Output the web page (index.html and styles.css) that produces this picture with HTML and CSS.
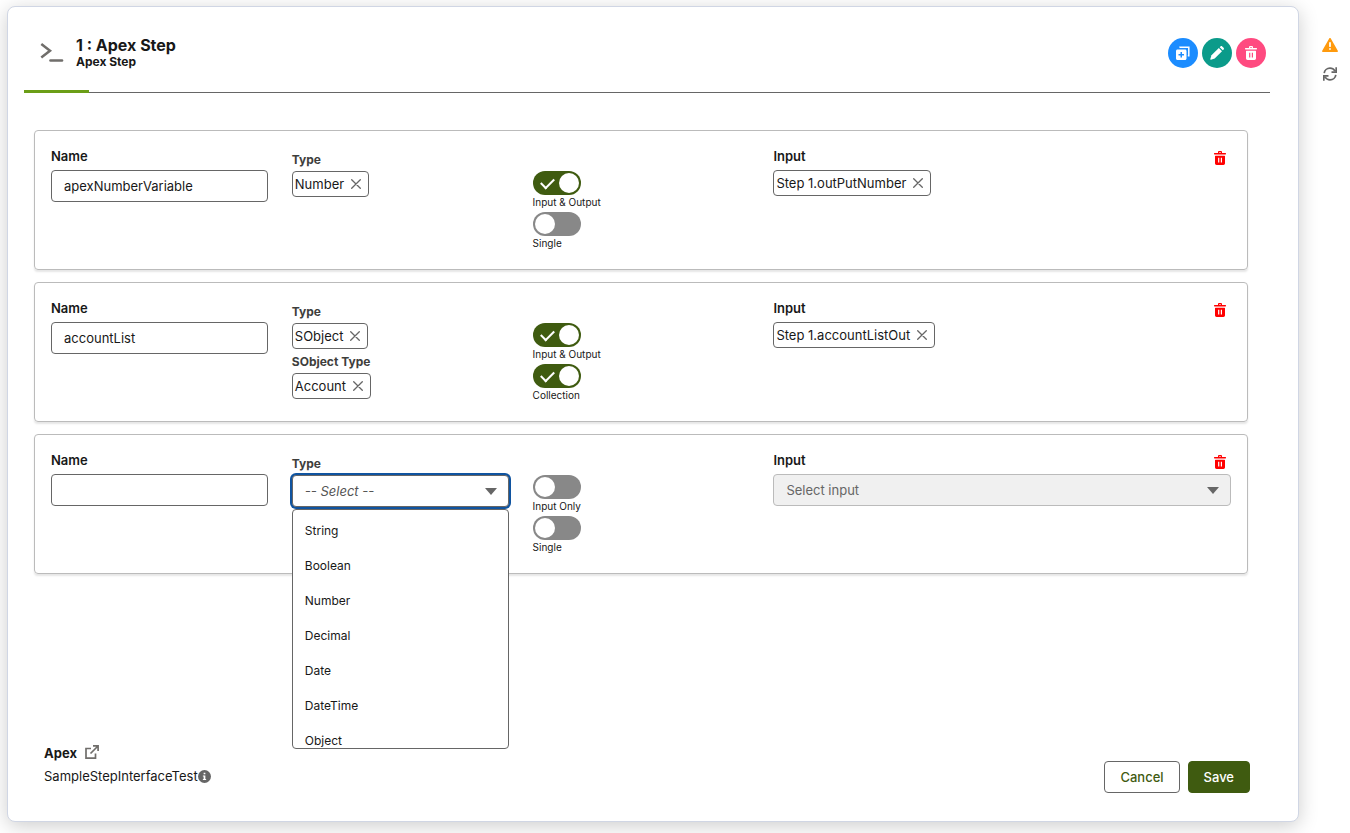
FILE: index.html
```html
<!DOCTYPE html>
<html lang="en">
<head>
    <meta charset="UTF-8">
    <meta name="viewport" content="width=device-width, initial-scale=1.0">
    <title>Apex Step</title>
    <link rel="stylesheet" href="styles.css">
</head>
<body>
    <!-- shared icons -->
    <svg class="sprite" aria-hidden="true">
        <symbol id="trash" viewBox="0 0 12 14">
            <path fill="currentColor" fill-rule="evenodd" d="M4 2V1.200C4 .5 4.500 0 5.200 0h1.600C7.500 0 8 .5 8 1.200V2h3.500c.3 0 .5.2.5.5v.6c0 .3-.2.500-.5.500H.5c-.3 0-.5-.2-.5-.5v-.6C0 2.200.2 2 .5 2zM5.200 2h1.600v-.8H5.200zM1.500 4.800h9c.3 0 .5.2.5.5v7c0 .9-.7 1.700-1.600 1.700H2.600c-.9 0-1.600-.8-1.600-1.700v-7c0-.3.2-.5.5-.5zM4.100 6.700v4.800h1.200V6.700zM6.800 6.700v4.800H8V6.700z"/>
        </symbol>
        <symbol id="close" viewBox="0 0 10 10">
            <path fill="none" stroke="currentColor" stroke-width="1.300" stroke-linecap="round" d="M.7.7l8.600 8.600M9.300.7L.7 9.300"/>
        </symbol>
    </svg>

    <main class="card">
        <header class="card-header">
            <svg class="step-icon" width="24" height="22" viewBox="0 0 24 22" fill="none" stroke="#706e6b">
                <path stroke-width="2.500" d="M1.300 2l8.700 6.700-8.700 6.800"/>
                <path stroke-width="2.600" stroke-linecap="round" d="M10.500 18.500h11.500"/>
            </svg>
            <div class="titles">
                <h1>1 : Apex Step</h1>
                <p>Apex Step</p>
            </div>
            <div class="actions">
                <button type="button" class="round blue" aria-label="Clone">
                    <svg width="14" height="14" viewBox="0 0 14 14">
                        <path fill="none" stroke="#fff" stroke-width="1.500" d="M4 1.700V1.200h8.800v8.600h-1"/>
                        <path fill="#fff" fill-rule="evenodd" d="M1.500 3.500h7.500c.8 0 1.500.7 1.500 1.500v7.500c0 .8-.7 1.500-1.500 1.500H1.500C.7 14 0 13.300 0 12.500V5c0-.8.7-1.500 1.500-1.500zM4.500 6v2h-2v1.500h2v2H6v-2h2V8H6V6z"/>
                    </svg>
                </button>
                <button type="button" class="round teal" aria-label="Edit">
                    <svg width="14" height="14" viewBox="0 0 14 14" fill="#fff">
                        <path d="M1.500 9.300l7.300-7.300 3.200 3.200-7.300 7.300-3.800 1.200c-.4.1-.7-.2-.6-.6z"/>
                        <path d="M9.700 1.200l.8-.8c.5-.5 1.200-.5 1.700 0l1.400 1.400c.5.5.5 1.200 0 1.700l-.8.8z"/>
                    </svg>
                </button>
                <button type="button" class="round pink" aria-label="Delete step">
                    <svg width="12" height="14"><use href="#trash"/></svg>
                </button>
            </div>
        </header>

        <section class="rows">
            <div class="row">
                <div class="field">
                    <label for="name1">Name</label>
                    <input type="text" id="name1" value="apexNumberVariable">
                </div>
                <div class="types">
                    <span class="type-label">Type</span>
                    <div class="chip">Number <button type="button" aria-label="Remove Number"><svg width="10" height="10"><use href="#close"/></svg></button></div>
                </div>
                <div class="toggles">
                    <label class="toggle"><input type="checkbox" checked>Input &amp; Output</label>
                    <label class="toggle"><input type="checkbox">Single</label>
                </div>
                <div class="field wide">
                    <div class="field-head">
                        <span class="label">Input</span>
                        <button type="button" class="delete" aria-label="Delete variable"><svg width="12" height="14"><use href="#trash"/></svg></button>
                    </div>
                    <div class="chip">Step 1.outPutNumber <button type="button" aria-label="Remove input"><svg width="10" height="10"><use href="#close"/></svg></button></div>
                </div>
            </div>

            <div class="row">
                <div class="field">
                    <label for="name2">Name</label>
                    <input type="text" id="name2" value="accountList">
                </div>
                <div class="types">
                    <span class="type-label">Type</span>
                    <div class="chip">SObject <button type="button" aria-label="Remove SObject"><svg width="10" height="10"><use href="#close"/></svg></button></div>
                    <span class="type-label">SObject Type</span>
                    <div class="chip">Account <button type="button" aria-label="Remove Account"><svg width="10" height="10"><use href="#close"/></svg></button></div>
                </div>
                <div class="toggles">
                    <label class="toggle"><input type="checkbox" checked>Input &amp; Output</label>
                    <label class="toggle"><input type="checkbox" checked>Collection</label>
                </div>
                <div class="field wide">
                    <div class="field-head">
                        <span class="label">Input</span>
                        <button type="button" class="delete" aria-label="Delete variable"><svg width="12" height="14"><use href="#trash"/></svg></button>
                    </div>
                    <div class="chip">Step 1.accountListOut <button type="button" aria-label="Remove input"><svg width="10" height="10"><use href="#close"/></svg></button></div>
                </div>
            </div>

            <div class="row">
                <div class="field">
                    <label for="name3">Name</label>
                    <input type="text" id="name3">
                </div>
                <div class="types">
                    <label class="type-label" for="type3">Type</label>
                    <div class="select open">
                        <select id="type3">
                            <option>-- Select --</option>
                        </select>
                        <ul class="menu" role="listbox" aria-label="Type">
                            <li role="option">String</li>
                            <li role="option">Boolean</li>
                            <li role="option">Number</li>
                            <li role="option">Decimal</li>
                            <li role="option">Date</li>
                            <li role="option">DateTime</li>
                            <li role="option">Object</li>
                        </ul>
                    </div>
                </div>
                <div class="toggles">
                    <label class="toggle"><input type="checkbox">Input Only</label>
                    <label class="toggle"><input type="checkbox">Single</label>
                </div>
                <div class="field wide">
                    <div class="field-head">
                        <label for="input3">Input</label>
                        <button type="button" class="delete" aria-label="Delete variable"><svg width="12" height="14"><use href="#trash"/></svg></button>
                    </div>
                    <div class="select">
                        <select id="input3" disabled>
                            <option>Select input</option>
                        </select>
                    </div>
                </div>
            </div>
        </section>

        <footer class="card-footer">
            <div class="apex">
                <h2>Apex
                    <a href="#" aria-label="Open Apex class">
                        <svg width="14" height="14" viewBox="0 0 14 14" fill="none" stroke="#706e6b">
                            <path stroke-width="1.700" d="M6 3.500H1v9.600h9.500V8.500M8 .9h5.100V6M13 1L5.500 8.500"/>
                        </svg>
                    </a>
                </h2>
                <p>SampleStepInterfaceTest
                    <svg width="13" height="13" viewBox="0 0 12 12">
                        <circle cx="6" cy="6" r="6" fill="#666"/>
                        <path fill="#fff" d="M5.200 2.500h1.600v1.500H5.200zM4.500 5h2.300v3.200h.7v1h-3v-1h.7V6h-.7z"/>
                    </svg>
                </p>
            </div>
            <button type="button" class="btn">Cancel</button>
            <button type="button" class="btn save">Save</button>
        </footer>
    </main>

    <aside class="side">
        <svg width="16" height="14" viewBox="0 0 16 14">
            <path fill="#ff9a0d" d="M7.200.5c.4-.6 1.200-.6 1.600 0l7 12.200c.4.6 0 1.300-.6 1.300H.8c-.6 0-1-.7-.6-1.300z"/>
            <path stroke="#fff" stroke-width="1.800" stroke-linecap="round" d="M8 5v3.200M8 11v.1"/>
        </svg>
        <button type="button" aria-label="Refresh">
            <svg width="14" height="14" viewBox="0 0 14 14" fill="none" stroke="#666" stroke-width="1.700">
                <path d="M1.200 6.200C1.500 3.200 4 1.200 7 1.200c2 0 3.800 1 4.900 2.700M13.200.2v5H8.500M12.800 7.800C12.500 10.800 10 12.800 7 12.800c-2 0-3.800-1-4.900-2.700M.8 13.800v-5h4.700"/>
            </svg>
        </button>
    </aside>
</body>
</html>
```
FILE: styles.css
```css
* {
    margin: 0;
    padding: 0;
    box-sizing: border-box;
}

body {
    min-height: 100vh;
    display: flex;
    padding: 6px 0 11px 7px;
    background: #fff;
    color: #181818;
    font-family: Inter, "Liberation Sans", sans-serif;
    font-size: 13px;
    line-height: 19px;
}

button,
input,
select {
    font: inherit;
    color: inherit;
}

button {
    border: none;
    background: none;
    cursor: pointer;
}

svg {
    display: block;
}

.sprite {
    position: absolute;
    width: 0;
    height: 0;
}

.card {
    flex: 1;
    display: flex;
    flex-direction: column;
    padding: 0 28px 28px 16px;
    border: 1px solid #d0d6e4;
    border-radius: 8px;
    background: #fff;
    box-shadow: 0 4px 20px rgba(0, 0, 0, 0.2);
}

/* Header */
.card-header {
    position: relative;
    display: flex;
    align-items: center;
    padding: 29px 4px 22px 16px;
    border-bottom: 1px solid #666;
}

.card-header::after {
    content: "";
    position: absolute;
    left: 0;
    bottom: -1px;
    width: 65px;
    height: 3px;
    background: #6b9e17;
}

.step-icon {
    margin-right: 12px;
}

.titles {
    flex: 1;
}

.titles h1 {
    font-size: 16px;
    line-height: 18px;
}

.titles p {
    font-size: 12px;
    font-weight: 700;
    line-height: 16px;
}

.actions {
    display: flex;
    gap: 4px;
}

.round {
    width: 30px;
    height: 30px;
    display: flex;
    align-items: center;
    justify-content: center;
    border-radius: 50%;
    color: #fff;
}

.blue {
    background: #1b8cff;
}

.teal {
    background: #0b9b8a;
}

.pink {
    background: #ff4a80;
}

/* Variable rows */
.rows {
    display: flex;
    flex-direction: column;
    gap: 12px;
    padding: 37px 22px 0 10px;
}

.row {
    display: grid;
    grid-template-columns: repeat(5, 1fr);
    gap: 24px;
    min-height: 140px;
    padding: 16px;
    border: 1px solid #bbb;
    border-radius: 4px;
    box-shadow: 0 2px 2px rgba(0, 0, 0, 0.1);
}

.field {
    display: flex;
    flex-direction: column;
    align-items: flex-start;
    gap: 4px;
}

.wide {
    grid-column: span 2;
}

.field label,
.label {
    font-weight: 600;
}

.field input {
    width: 100%;
    height: 32px;
    padding: 0 12px;
    border: 1px solid #666;
    border-radius: 4px;
    background: #fff;
    outline: none;
}

.field-head {
    width: 100%;
    display: flex;
    justify-content: space-between;
    padding-right: 5px;
}

.delete {
    padding-top: 4px;
    height: 18px;
    color: #f00;
}

.types {
    display: flex;
    flex-direction: column;
    align-items: flex-start;
}

.type-label {
    padding: 3px 0 2px;
    color: #3e3e3c;
    font-size: 12px;
    font-weight: 700;
}

.chip {
    display: flex;
    align-items: center;
    gap: 7px;
    height: 26px;
    padding: 0 7px 0 2px;
    border: 1px solid #666;
    border-radius: 4px;
}

.chip button {
    color: #666;
}

.toggles {
    padding-top: 24px;
}

.toggle {
    display: block;
    padding-bottom: 3px;
    font-size: 10px;
    line-height: 14px;
}

.toggle input {
    appearance: none;
    position: relative;
    display: block;
    width: 48px;
    height: 24px;
    border-radius: 12px;
    background: #888;
}

.toggle input::before {
    content: "";
    position: absolute;
    top: 2px;
    left: 2px;
    width: 20px;
    height: 20px;
    border-radius: 50%;
    background: #fff;
}

.toggle input:checked {
    background: #3f5b10;
}

.toggle input:checked::before {
    left: 26px;
}

.toggle input:checked::after {
    content: "";
    position: absolute;
    left: 8px;
    top: 7px;
    width: 11px;
    height: 6px;
    border: solid #fff;
    border-width: 0 0 2px 2px;
    transform: rotate(-45deg);
}

/* Select boxes */
.select {
    position: relative;
    width: 100%;
}

.select::after {
    content: "";
    position: absolute;
    top: 13px;
    right: 12px;
    border: 6px solid transparent;
    border-top: 7px solid #666;
    border-bottom: none;
    pointer-events: none;
}

.select select {
    appearance: none;
    display: block;
    width: 100%;
    height: 32px;
    padding: 0 12px;
    border: 1px solid #666;
    border-radius: 4px;
    background: #fff;
    outline: none;
}

.select select:disabled {
    border-color: #bbb;
    background: #f0f0f0;
    color: #666;
    opacity: 1;
}

.open select {
    color: #555;
    font-style: italic;
    box-shadow: 0 0 0 2px #1054a0;
}

.menu {
    position: absolute;
    z-index: 1;
    top: 34px;
    left: 0;
    width: 100%;
    height: 240px;
    padding-top: 3px;
    overflow: hidden;
    border: 1px solid #666;
    border-radius: 4px;
    background: #fff;
    list-style: none;
}

.menu li {
    padding: 8px 12px;
    font-size: 12px;
}

/* Footer */
.card-footer {
    display: flex;
    align-items: flex-end;
    gap: 8px;
    margin-top: auto;
    padding: 0 20px;
}

.apex {
    flex: 1;
    padding-bottom: 7px;
}

.apex h2,
.apex p {
    display: flex;
    align-items: center;
    gap: 8px;
    font-size: 13px;
}

.apex h2 a {
    padding-bottom: 4px;
}

.apex p {
    gap: 0;
    padding-top: 4px;
}

.btn {
    height: 32px;
    padding: 0 15px;
    border: 1px solid #666;
    border-radius: 4px;
    color: #3f5b10;
    font-weight: 500;
}

.save {
    border-color: #3f5b10;
    background: #3f5b10;
    color: #fff;
}

/* Icons next to the card */
.side {
    display: flex;
    flex-direction: column;
    align-items: center;
    gap: 15px;
    padding: 32px 12px 0 23px;
}
```
